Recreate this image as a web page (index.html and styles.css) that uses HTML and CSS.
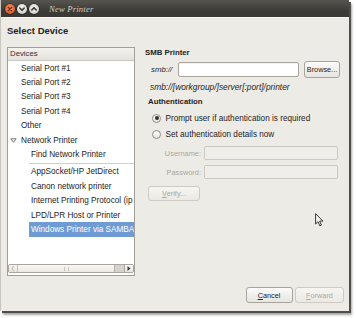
FILE: index.html
```html
<!DOCTYPE html>
<html>
<head>
<meta charset="utf-8">
<title>New Printer</title>
<link rel="stylesheet" href="styles.css">
</head>
<body>
<div class="screen">
  <div class="window">
    <div class="titlebar">
      <div class="wbtns">
        <span class="wbtn close"><svg viewBox="0 0 10 10" width="10" height="10"><path d="M3.3 3.3 L6.7 6.7 M6.7 3.3 L3.3 6.7" stroke="#7a2a0c" stroke-width="1.3" stroke-linecap="round"/></svg></span>
        <span class="wbtn"><svg viewBox="0 0 10 10" width="10" height="10"><path d="M2.8 4 L5 6.3 L7.2 4" fill="none" stroke="#3a3935" stroke-width="1.6" stroke-linecap="round" stroke-linejoin="round"/></svg></span>
        <span class="wbtn"><svg viewBox="0 0 10 10" width="10" height="10"><path d="M2.8 6 L5 3.7 L7.2 6" fill="none" stroke="#3a3935" stroke-width="1.6" stroke-linecap="round" stroke-linejoin="round"/></svg></span>
      </div>
      <span class="wtitle">New Printer</span>
    </div>
    <div class="body">
      <h1 class="heading">Select Device</h1>
      <div class="main">
        <div class="devices">
          <div class="dev-header">Devices</div>
          <ul class="dev-list">
            <li class="row l1">Serial Port #1</li>
            <li class="row l1">Serial Port #2</li>
            <li class="row l1">Serial Port #3</li>
            <li class="row l1">Serial Port #4</li>
            <li class="row l1">Other</li>
            <li class="row l1 parent"><svg class="expander" viewBox="0 0 7 5" width="7" height="5"><path d="M0.8 0.8 L6.2 0.8 L3.5 4.3 Z" fill="#fff" stroke="#6b6861" stroke-width="0.9" stroke-linejoin="round"/></svg>Network Printer</li>
            <li class="row l2">Find Network Printer</li>
            <li class="sep"></li>
            <li class="row l2">AppSocket/HP JetDirect</li>
            <li class="row l2">Canon network printer</li>
            <li class="row l2">Internet Printing Protocol (ip</li>
            <li class="row l2">LPD/LPR Host or Printer</li>
            <li class="row l2 selected">Windows Printer via SAMBA</li>
          </ul>
          <div class="hscroll">
            <span class="sb-btn"><svg viewBox="0 0 6 7" width="6" height="7"><path d="M4 1 L2 3.5 L4 6" fill="none" stroke="#bdb9b1" stroke-width="1.1"/></svg></span>
            <span class="sb-thumb"><span class="grip"></span></span>
            <span class="sb-trough"></span>
            <span class="sb-btn right"><svg viewBox="0 0 6 7" width="6" height="7"><path d="M1.5 1 L4.5 3.5 L1.5 6 Z" fill="#3a3935"/></svg></span>
          </div>
        </div>
        <div class="form">
          <div class="section-title">SMB Printer</div>
          <div class="smb-row">
            <span class="smb-label">smb://</span>
            <span class="field"></span>
            <span class="btn browse">Browse...</span>
          </div>
          <div class="hint">smb://[workgroup/]server[:port]/printer</div>
          <div class="section-title auth">Authentication</div>
          <div class="radio-row first"><span class="radio on"></span><span>Prompt user if authentication is required</span></div>
          <div class="radio-row"><span class="radio"></span><span>Set authentication details now</span></div>
          <div class="cred-grid">
            <span class="cred-label">Username:</span>
            <span class="field disabled"></span>
            <span class="cred-label">Password:</span>
            <span class="field disabled"></span>
          </div>
          <span class="btn verify disabled"><u>V</u>erify...</span>
        </div>
      </div>
      <div class="actions">
        <span class="btn cancel"><u>C</u>ancel</span>
        <span class="btn forward disabled"><u>F</u>orward</span>
      </div>
    </div>
  </div>
  <svg class="cursor" viewBox="0 0 9 14" width="9" height="14"><path d="M0.6 0.6 L0.6 11 L3 8.7 L4.8 12.8 L6.4 12.1 L4.6 8.1 L7.9 8.1 Z" fill="#f4f4f2" stroke="#222" stroke-width="0.9" stroke-linejoin="round"/></svg>
</div>
</body>
</html>
```

FILE: styles.css
```css
* { box-sizing: border-box; }

html, body {
  margin: 0;
  padding: 0;
  background: #ffffff;
}

body {
  font-family: "Liberation Sans", Arial, sans-serif;
  color: #242424;
}

.screen {
  position: relative;
  width: 356px;
  height: 318px;
  overflow: hidden;
  background: #ffffff;
}

.window {
  width: 349px;
  height: 311px;
  display: flex;
  flex-direction: column;
  background: #edebe6;
  border-left: 1px solid #c9c6bf;
  box-shadow: 2px 2px 0 #4f4e4b, 3px 4px 2px rgba(0, 0, 0, 0.35);
}

.titlebar {
  height: 17px;
  display: flex;
  align-items: center;
  padding-left: 4px;
  background: linear-gradient(#57554f, #3d3c38 60%, #393834);
}

.wbtns {
  display: flex;
  gap: 2px;
}

.wbtn {
  width: 10px;
  height: 10px;
  border-radius: 50%;
  display: flex;
  background: radial-gradient(circle at 50% 40%, #f4f3f0, #c9c6bf);
  box-shadow: 0 0 0 0.6px #25241f;
}

.wbtn.close {
  background: radial-gradient(circle at 50% 40%, #f6a07a, #dc5b26 70%, #b8441a);
}

.wtitle {
  margin-left: 10px;
  font-family: "Liberation Serif", serif;
  font-style: italic;
  font-size: 8.6px;
  color: #d3cfc6;
  letter-spacing: 0.2px;
}

.body {
  flex: 1;
  display: flex;
  flex-direction: column;
  border-top: 1px solid #f8f7f4;
  padding-left: 6px;
}

.heading {
  margin: 7px 0 0 0;
  height: 12px;
  line-height: 12px;
  font-size: 9.5px;
  font-weight: bold;
  color: #222222;
}

.main {
  margin-top: 10px;
  height: 229px;
  display: flex;
}

.devices {
  width: 128px;
  height: 229px;
  border: 1px solid #a39f96;
  background: #ffffff;
  display: flex;
  flex-direction: column;
}

.dev-header {
  height: 13px;
  line-height: 12px;
  padding-left: 2px;
  font-size: 7.8px;
  color: #333333;
  background: linear-gradient(#f3f2ef, #e4e2dd);
  border-bottom: 1px solid #cbc8c1;
}

.dev-list {
  list-style: none;
  margin: 0;
  padding: 0;
}

.row {
  height: 14.4px;
  display: flex;
  align-items: center;
  font-size: 8.2px;
  white-space: nowrap;
  overflow: hidden;
}

.row.l1 {
  padding-left: 13px;
}

.row.l1.parent {
  padding-left: 2px;
}

.expander {
  margin-right: 4px;
  flex: none;
}

.row.l2 {
  margin-left: 21px;
  padding-left: 2px;
}

.row.selected {
  background: #6f9bd4;
  color: #ffffff;
}

.sep {
  height: 1px;
  margin: 1px 0 1px 21px;
  background: #d2cfc8;
}

.hscroll {
  margin: auto 0 2px 0;
  height: 9px;
  display: flex;
  border: 1px solid #aaa69d;
  border-radius: 2px;
  background: #e3e0da;
  overflow: hidden;
}

.sb-btn {
  width: 9px;
  flex: none;
  display: flex;
  align-items: center;
  justify-content: center;
  background: linear-gradient(#faf9f7, #e6e4df);
  border-right: 1px solid #c3c0b8;
}

.sb-btn.right {
  border-right: none;
  border-left: 1px solid #aaa69d;
}

.sb-thumb {
  width: 97px;
  flex: none;
  display: flex;
  align-items: center;
  justify-content: center;
  background: linear-gradient(#f8f7f5, #ebe9e4);
  border-right: 1px solid #b7b3ab;
}

.grip {
  width: 5px;
  height: 4px;
  border-left: 1px solid #c9c6be;
  border-right: 1px solid #c9c6be;
}

.sb-trough {
  flex: 1;
  background: #d6d3cc;
}

.form {
  margin-left: 10px;
  display: flex;
  flex-direction: column;
  align-items: flex-start;
}

.section-title {
  height: 12px;
  line-height: 12px;
  font-size: 7.8px;
  font-weight: bold;
  color: #222222;
}

.section-title.auth {
  margin-top: 3px;
  padding-left: 3px;
}

.smb-row {
  margin-top: 2px;
  padding-left: 6px;
  display: flex;
  align-items: center;
  height: 16px;
}

.smb-label {
  width: 27px;
  font-size: 7.8px;
  font-style: italic;
}

.field {
  display: block;
  width: 121px;
  height: 15px;
  background: #ffffff;
  border: 1px solid #a9a59d;
  border-radius: 2px;
  box-shadow: inset 0 1px 1px rgba(0, 0, 0, 0.06);
}

.field.disabled {
  width: 134px;
  height: 14px;
  background: #f0eeea;
  border-color: #cdc9c1;
  box-shadow: none;
}

.btn {
  display: flex;
  align-items: center;
  justify-content: center;
  height: 16px;
  font-size: 7.3px;
  color: #242424;
  border: 1px solid #a8a49b;
  border-radius: 3px;
  background: linear-gradient(#fcfbfa, #e7e5e0);
}

.btn u {
  text-decoration-thickness: 0.6px;
  text-underline-offset: 1px;
}

.btn.disabled {
  color: #aca89f;
  border-color: #cfcbc3;
  background: linear-gradient(#f6f5f2, #ebe9e4);
}

.browse {
  width: 36px;
  height: 17px;
  margin-left: 5px;
}

.hint {
  margin-top: 4px;
  padding-left: 5px;
  height: 12px;
  line-height: 12px;
  font-size: 8.4px;
  font-style: italic;
}

.radio-row {
  height: 14px;
  display: flex;
  align-items: center;
  padding-left: 7px;
  font-size: 8.2px;
  margin-top: 2.3px;
}

.radio-row.first {
  margin-top: 3px;
}

.radio {
  width: 9px;
  height: 9px;
  border-radius: 50%;
  border: 1px solid #8f8b83;
  background: linear-gradient(#ffffff, #e6e4df);
  margin-right: 4.5px;
  display: flex;
  align-items: center;
  justify-content: center;
  flex: none;
}

.radio.on::after {
  content: "";
  width: 4px;
  height: 4px;
  border-radius: 50%;
  background: #2f2f2f;
}

.cred-grid {
  margin-top: 5px;
  display: grid;
  grid-template-columns: 49px 134px;
  column-gap: 3px;
  row-gap: 5px;
  align-items: center;
  padding-left: 7px;
}

.cred-label {
  justify-self: end;
  font-size: 7.4px;
  color: #aca89f;
}

.verify {
  margin-top: 6.5px;
  margin-left: 3px;
  width: 52px;
  height: 15.5px;
}

.actions {
  margin-top: 11px;
  display: flex;
  justify-content: flex-end;
  gap: 2.5px;
  padding-right: 5px;
}

.cancel {
  width: 47px;
}

.forward {
  width: 49px;
}

.cursor {
  position: absolute;
  left: 315px;
  top: 213px;
}
```
